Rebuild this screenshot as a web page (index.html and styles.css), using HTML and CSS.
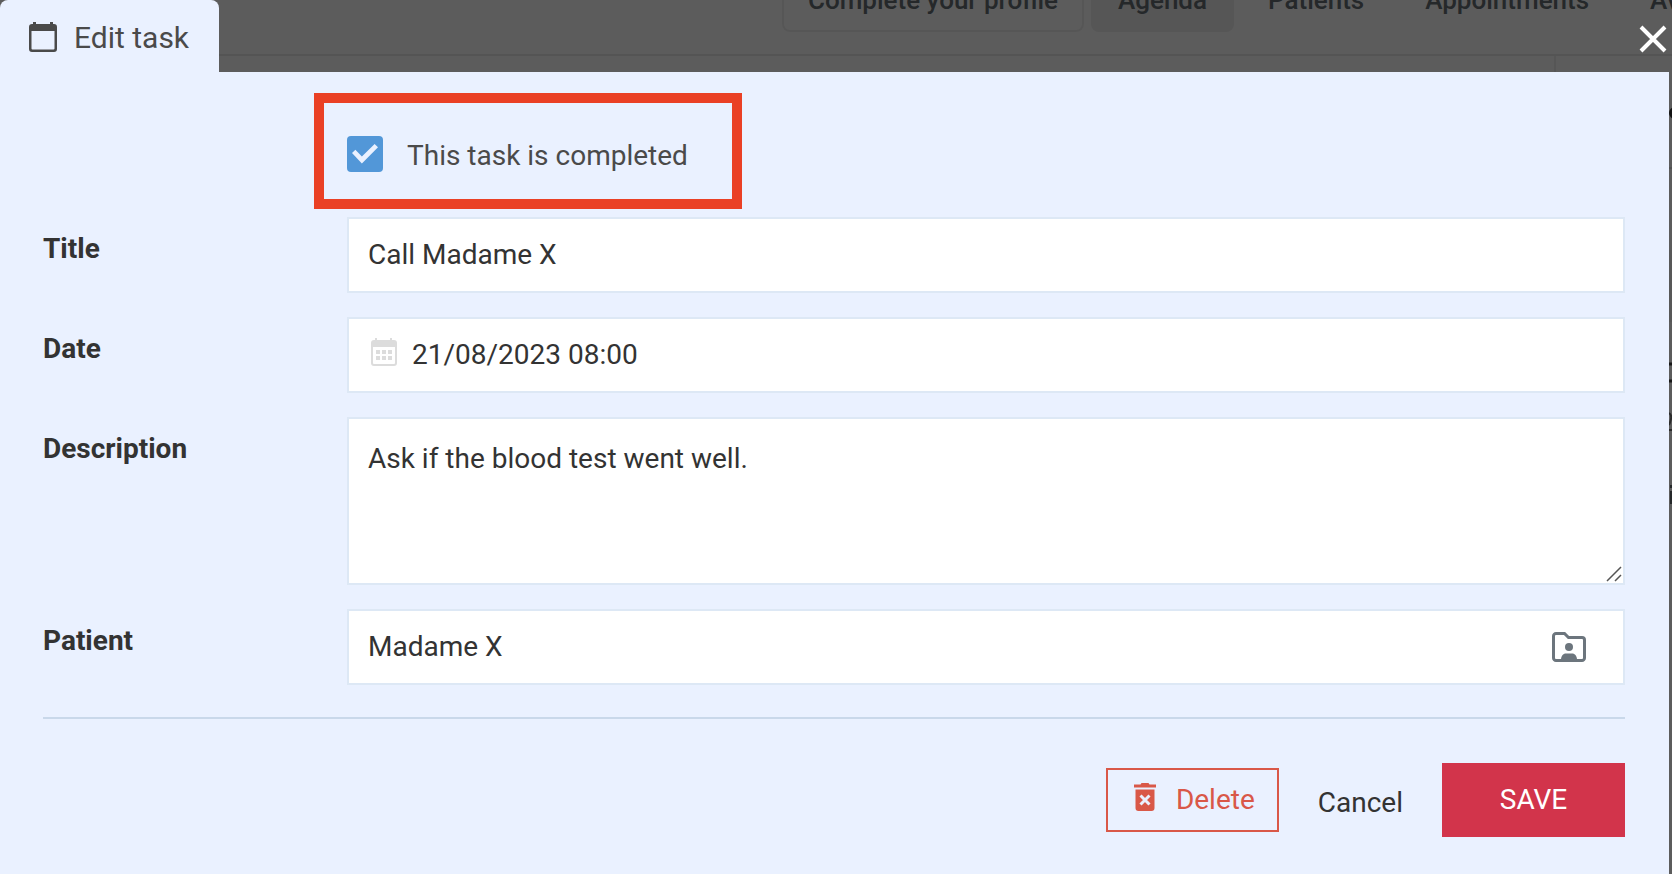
FILE: index.html
```html
<!DOCTYPE html>
<html lang="en">
<head>
<meta charset="utf-8">
<meta name="viewport" content="width=device-width, initial-scale=1">
<title>Edit task</title>
<link rel="stylesheet" href="styles.css">
</head>
<body>
<div class="page">
  <header class="topbar">
    <nav class="nav">
      <a class="nav-item nav-outlined" href="#profile">Complete your profile</a>
      <a class="nav-item nav-active" href="#agenda">Agenda</a>
      <a class="nav-item" href="#patients">Patients</a>
      <a class="nav-item" href="#appointments">Appointments</a>
      <a class="nav-item" href="#availability">Availability</a>
    </nav>
  </header>
  <div class="page-body">
    <aside class="sidebar">
      <svg class="sidebar-edge" width="3" height="480" viewBox="0 0 3 480" aria-hidden="true">
        <path d="M0 112h3" stroke="#e4e4e4" stroke-width="2"/>
        <path d="M0 194h3v72H0z" fill="#f4f4f4"/>
        <circle cx="6" cy="57" r="6" fill="#333"/>
        <path d="M0 308h3M0 325h3" stroke="#444" stroke-width="3"/>
        <path d="M0 357q3 2 2 6t-2 6M0 374h3" fill="none" stroke="#777" stroke-width="2"/>
        <path d="M1 429h2v3H1zM1 435h2v13H1z" fill="#666f75"/>
      </svg>
    </aside>
  </div>
</div>

<div class="overlay">
  <div class="dialog" role="dialog" aria-labelledby="dialog-title">
    <div class="dialog-head">
      <div class="tab">
        <svg class="tab-icon" viewBox="0 0 28 30" aria-hidden="true">
          <path fill="currentColor" fill-rule="evenodd" d="M4 0h3v2h14V0h3v2h1a3 3 0 0 1 3 3v22a3 3 0 0 1-3 3H3a3 3 0 0 1-3-3V5a3 3 0 0 1 3-3h1zM2.500 9v17.500a1 1 0 0 0 1 1h21a1 1 0 0 0 1-1V9z"/>
        </svg>
        <h1 class="tab-title" id="dialog-title">Edit task</h1>
      </div>
      <button class="close" type="button" aria-label="Close">
        <svg viewBox="0 0 28 28" aria-hidden="true"><path d="M2 2l24 24M26 2L2 26" fill="none" stroke="currentColor" stroke-width="4"/></svg>
      </button>
    </div>

    <form class="panel">
      <div class="completed">
        <input class="check" type="checkbox" id="completed" checked>
        <label class="check-label" for="completed">This task is completed</label>
      </div>

      <div class="fields">
        <label class="label" for="title">Title</label>
        <input class="box" id="title" type="text" value="Call Madame X">

        <label class="label" for="date">Date</label>
        <div class="box-wrap">
          <svg class="date-icon" viewBox="0 0 26 28" aria-hidden="true">
            <path fill="currentColor" fill-rule="evenodd" d="M4 0h2v2h13V0h2v2h2a3 3 0 0 1 3 3v20a3 3 0 0 1-3 3H3a3 3 0 0 1-3-3V5a3 3 0 0 1 3-3h1zM2 9v16a1 1 0 0 0 1 1h20a1 1 0 0 0 1-1V9zM5 12h4v4H5zM11 12h4v4h-4zM17 12h4v4h-4zM5 18h4v4H5zM11 18h4v4h-4zM17 18h4v4h-4z"/>
          </svg>
          <input class="box box-date" id="date" type="text" value="21/08/2023 08:00">
        </div>

        <label class="label" for="description">Description</label>
        <div class="box-wrap">
          <textarea class="box box-area" id="description">Ask if the blood test went well.</textarea>
          <svg class="grip" viewBox="0 0 16 16" aria-hidden="true"><path d="M1 15L15 1M9 15l6-6" fill="none" stroke="#555" stroke-width="1.500"/></svg>
        </div>

        <label class="label" for="patient">Patient</label>
        <div class="box-wrap">
          <input class="box" id="patient" type="text" value="Madame X">
          <button class="folder" type="button" aria-label="Open patient file">
            <svg viewBox="0 0 34 30" aria-hidden="true">
              <path d="M4 1.500h8.500l4 4H30a2.500 2.500 0 0 1 2.500 2.500v18a2.500 2.500 0 0 1-2.500 2.500H4A2.500 2.500 0 0 1 1.500 26V4A2.500 2.500 0 0 1 4 1.500z" fill="none" stroke="currentColor" stroke-width="3"/>
              <circle cx="17" cy="15" r="4" fill="currentColor"/>
              <path d="M9 28c0-4 2-6.500 5-6.500h6c3 0 5 2.500 5 6.500z" fill="currentColor"/>
            </svg>
          </button>
        </div>
      </div>

      <div class="actions">
        <button class="btn btn-delete" type="button">
          <svg class="trash" viewBox="0 0 22 28" aria-hidden="true">
            <path fill="currentColor" d="M0 1.500h6.500L7.500 0h7l1 1.500H22v3H0zM1.500 6.500h19V25a3 3 0 0 1-3 3h-13a3 3 0 0 1-3-3z"/>
            <path d="M6.500 12.500l9 9M15.500 12.500l-9 9" stroke="#eaf1ff" stroke-width="3"/>
          </svg>
          Delete
        </button>
        <button class="btn btn-cancel" type="button">Cancel</button>
        <button class="btn btn-save" type="submit">SAVE</button>
      </div>
    </form>
  </div>
</div>
</body>
</html>
```
FILE: styles.css
```css
* {
  box-sizing: border-box;
}

body {
  margin: 0;
  min-height: 100vh;
  overflow: hidden;
  background: #fff;
  font-family: Roboto, "Liberation Sans", sans-serif;
  font-size: 28px;
  line-height: 32px;
}

.page {
  display: flex;
  flex-direction: column;
  height: 100vh;
  overflow: hidden;
}

/* The top bar is half scrolled out of view. */
.topbar {
  display: flex;
  flex: none;
  align-items: center;
  height: 110px;
  margin-top: -54px;
  padding-left: 782px;
  border-bottom: 2px solid #e9e9e9;
}

.nav {
  display: flex;
  gap: 7px;
}

.nav-item {
  flex: none;
  padding: 14px 25px;
  border: 2px solid transparent;
  border-radius: 8px;
  color: #666f75;
  font-size: 26px;
  font-weight: 500;
  text-decoration: none;
  white-space: nowrap;
}

.nav-outlined {
  padding: 14px 24px;
  border-color: #efefef;
}

.nav-active {
  background: #ededed;
}

.page-body {
  display: flex;
  flex: 1;
  justify-content: flex-end;
}

.sidebar {
  display: flex;
  justify-content: flex-end;
  width: 118px;
  border-left: 2px solid #eee;
}

.overlay {
  position: absolute;
  inset: 0;
  overflow: hidden;
  background: rgba(0, 0, 0, 0.64);
}

.dialog {
  display: flex;
  flex-direction: column;
  min-height: 100%;
  margin-right: 3px;
}

.dialog-head {
  display: flex;
  align-items: center;
  justify-content: space-between;
  height: 72px;
}

.tab {
  display: flex;
  align-items: center;
  gap: 17px;
  height: 72px;
  padding: 3px 30px 0 29px;
  border-radius: 8px 8px 0 0;
  background: #eaf1ff;
  color: #4a4a4a;
}

.tab-icon {
  width: 28px;
  height: 30px;
  margin-bottom: 2px;
}

.tab-title {
  margin: 0;
  font-size: 30px;
  font-weight: 400;
}

.close {
  width: 28px;
  height: 28px;
  margin: 6px 2px 0 0;
  padding: 0;
  border: 0;
  background: none;
  color: #fff;
}

.close svg,
.folder svg {
  display: block;
}

.panel {
  flex: 1;
  padding: 21px 44px 36px 43px;
  background: #eaf1ff;
}

.completed {
  display: flex;
  align-items: center;
  gap: 24px;
  width: 428px;
  height: 116px;
  margin-left: 271px;
  padding: 6px 23px 0;
  border: 10px solid #ea4025;
}

.check {
  display: grid;
  place-items: center;
  width: 36px;
  height: 36px;
  margin: 0;
  border-radius: 4px;
  background: #5297d8;
  appearance: none;
}

.check:checked::before {
  content: "";
  width: 26px;
  height: 20px;
  background: #eaf1ff;
  clip-path: polygon(0 45%, 13% 29%, 38% 63%, 87% 0, 100% 16%, 38% 98%);
}

.check-label {
  padding-top: 4px;
  color: #4a4a4a;
}

.fields {
  display: grid;
  grid-template-columns: 304px 1fr;
  row-gap: 24px;
  margin-top: 8px;
  padding-bottom: 32px;
  border-bottom: 2px solid #c9d8ea;
}

.label {
  padding-top: 16px;
  color: #333;
  font-weight: 700;
}

.box {
  display: block;
  width: 100%;
  height: 76px;
  margin: 0;
  padding: 0 19px 2px;
  border: 2px solid #dde8f5;
  border-radius: 0;
  outline: 0;
  background: #fff;
  color: #333;
  font: inherit;
}

.box-area {
  height: 168px;
  padding: 24px 19px;
  resize: vertical;
}

.box-area::-webkit-resizer {
  background: transparent;
}

.grip {
  position: absolute;
  right: 3px;
  bottom: 3px;
  width: 16px;
  height: 16px;
  pointer-events: none;
}

.box-wrap {
  position: relative;
}

.box-date {
  padding-left: 63px;
}

.date-icon {
  position: absolute;
  top: 21px;
  left: 24px;
  width: 26px;
  height: 28px;
  color: #dcdcdc;
}

.folder {
  position: absolute;
  top: 23px;
  right: 39px;
  width: 34px;
  height: 30px;
  padding: 0;
  border: 0;
  background: none;
  color: #6c757d;
}

.actions {
  display: flex;
  align-items: center;
  justify-content: flex-end;
  gap: 39px;
  padding-top: 44px;
}

.btn {
  margin: 0;
  padding: 0;
  border: 0;
  background: none;
  font: inherit;
}

.btn-delete {
  display: flex;
  align-items: center;
  gap: 20px;
  height: 64px;
  padding: 0 22px 0 26px;
  border: 2px solid #d95848;
  color: #d95848;
}

.trash {
  width: 22px;
  height: 28px;
  margin-bottom: 6px;
}

.btn-cancel {
  padding-top: 6px;
  color: #333;
}

.btn-save {
  width: 183px;
  height: 74px;
  background: #d2344b;
  color: #fff;
}
```
